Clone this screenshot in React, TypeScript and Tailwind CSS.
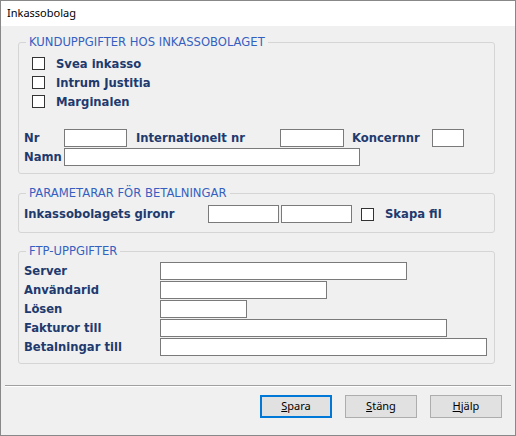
import React from 'react';

const labelCls = "font-bold text-[#1e3a6e] text-[11.6px] leading-[14px] whitespace-nowrap";
const font = { fontFamily: '"DejaVu Sans", Verdana, sans-serif' };

const Field: React.FC<{ w: string }> = ({ w }) => (
  <input
    type="text"
    readOnly
    className={`${w} h-[18px] border border-[#7a7a7a] bg-white outline-none`}
  />
);

const Check: React.FC<{ label: string; className?: string }> = ({ label, className }) => (
  <div className={`flex items-center ${className ?? ''}`}>
    <div className="w-[13px] h-[13px] border border-[#333] bg-white shrink-0" />
    <span className={`${labelCls} ml-[11px]`}>{label}</span>
  </div>
);

const Group: React.FC<{ title: string; className?: string; children: React.ReactNode }> = ({ title, className, children }) => (
  <fieldset className={`w-[477px] ml-[17px] border border-[#d5d5d5] rounded-[3px] px-[5px] ${className ?? ''}`}>
    <legend className="ml-[2px] px-[3px] text-[11.6px] leading-[14px] text-[#3560c0]">{title}</legend>
    {children}
  </fieldset>
);

const Btn: React.FC<{ ul: string; rest: string; primary?: boolean }> = ({ ul, rest, primary }) => (
  <button
    className={`w-[72px] h-[23px] bg-[#e1e1e1] text-[11px] text-black ${
      primary ? 'border-2 border-[#0078d7]' : 'border border-[#adadad]'
    }`}
    style={{ fontFamily: '"Noto Sans", sans-serif' }}
  >
    <span className="underline">{ul}</span>
    {rest}
  </button>
);

export default function App() {
  return (
    <div className="w-[516px] h-[436px] border border-[#888] bg-[#f0f0f0] flex flex-col" style={font}>
      <div className="h-[25px] bg-white flex items-center pl-[6px]">
        <span className="text-[11px] text-black" style={{ fontFamily: '"Noto Sans", sans-serif' }}>Inkassobolag</span>
      </div>

      <div className="pt-[9px]">
        <Group title="KUNDUPPGIFTER HOS INKASSOBOLAGET" className="pb-[7px]">
          <div className="mt-[5px] ml-[8px] flex flex-col">
            <Check label="Svea inkasso" className="h-[19px]" />
            <Check label="Intrum Justitia" className="h-[19px]" />
            <Check label="Marginalen" className="h-[19px]" />
          </div>
          <div className="mt-[18px] flex items-center">
            <span className={`${labelCls} w-[40px]`}>Nr</span>
            <Field w="w-[63px]" />
            <span className={`${labelCls} ml-[9px] w-[144px]`}>Internationelt nr</span>
            <Field w="w-[64px]" />
            <span className={`${labelCls} ml-[8px] w-[80px]`}>Koncernnr</span>
            <Field w="w-[32px]" />
          </div>
          <div className="mt-px flex items-center">
            <span className={`${labelCls} w-[40px]`}>Namn</span>
            <Field w="w-[296px]" />
          </div>
        </Group>

        <Group title="PARAMETARAR FÖR BETALNINGAR" className="mt-[12px] pb-[9px]">
          <div className="mt-[5px] flex items-center">
            <span className={`${labelCls} w-[184px]`}>Inkassobolagets gironr</span>
            <Field w="w-[71px]" />
            <Field w="w-[71px] ml-[2px]" />
            <Check label="Skapa fil" className="ml-[9px]" />
          </div>
        </Group>

        <Group title="FTP-UPPGIFTER" className="mt-[11px] pb-[7px]">
          <div className="mt-[4px] flex flex-col gap-px">
            {[
              ['Server', 'w-[247px]'],
              ['Användarid', 'w-[167px]'],
              ['Lösen', 'w-[87px]'],
              ['Fakturor till', 'w-[287px]'],
              ['Betalningar till', 'w-[327px]'],
            ].map(([label, w]) => (
              <div key={label} className="flex items-center">
                <span className={`${labelCls} w-[136px]`}>{label}</span>
                <Field w={w} />
              </div>
            ))}
          </div>
        </Group>
      </div>

      <div className="mt-[21px] mx-[4px] h-px bg-[#a0a0a0]" />
      <div className="h-px mx-[4px] bg-white" />

      <div className="mt-[8px] flex justify-end gap-[13px] pr-[13px]">
        <Btn ul="S" rest="para" primary />
        <Btn ul="S" rest="täng" />
        <Btn ul="H" rest="jälp" />
      </div>
    </div>
  );
}
